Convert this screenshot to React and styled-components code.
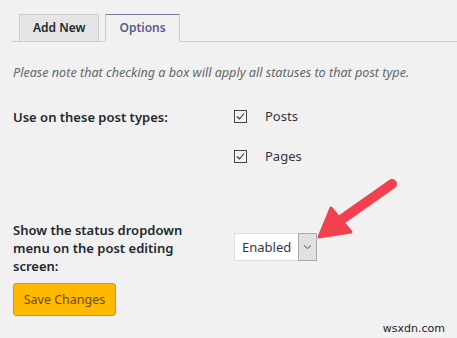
import styled, { createGlobalStyle } from 'styled-components';

const Global = createGlobalStyle`
  body {
    margin: 0;
    background: #f1f1f1;
    font-family: "Noto Sans", "Open Sans", sans-serif;
    color: #23282d;
  }
`;

function App() {
  return (
    <Page>
      <Global />
      <TabBar>
        <Tab>Add New</Tab>
        <Tab active>Options</Tab>
      </TabBar>
      <Note>Please note that checking a box will apply all statuses to that post type.</Note>
      <Form>
        <Label top={9}>Use on these post types:</Label>
        <CheckList>
          <CheckRow>
            <Box><CheckMark /></Box>
            Posts
          </CheckRow>
          <CheckRow>
            <Box><CheckMark /></Box>
            Pages
          </CheckRow>
        </CheckList>
        <Label top={56}>
          Show the status dropdown
          <br />
          menu on the post editing
          <br />
          screen:
        </Label>
        <SelectWrap>
          <Select>
            <SelectText>Enabled</SelectText>
            <SelectButton>
              <svg width="9" height="6" viewBox="0 0 9 6">
                <path d="M1 1.5 L4.5 4.5 L8 1.5" fill="none" stroke="#555" strokeWidth="1" />
              </svg>
            </SelectButton>
          </Select>
        </SelectWrap>
      </Form>
      <SaveButton>Save Changes</SaveButton>
      <Watermark>wsxdn.com</Watermark>
      <Arrow width="457" height="338" viewBox="0 0 457 338">
        <line x1="392" y1="184" x2="338" y2="222" stroke="#f2404e" strokeWidth="10" strokeLinecap="round" />
        <polygon points="319,237 331,208 351,232" fill="#f2404e" stroke="#f2404e" strokeWidth="3" strokeLinejoin="round" />
      </Arrow>
    </Page>
  );
}

export default App;

function CheckMark() {
  return (
    <svg width="11" height="11" viewBox="0 0 11 11">
      <path d="M2 5.5 L4.5 8 L9 2.5" fill="none" stroke="#333" strokeWidth="1.1" />
    </svg>
  );
}

const Page = styled.div`
  position: relative;
  width: 457px;
  height: 338px;
  overflow: hidden;
  padding-top: 14px;
  box-sizing: border-box;
`;

const TabBar = styled.div`
  display: flex;
  gap: 6px;
  margin-left: 12px;
  padding-left: 7px;
  border-bottom: 1px solid #ccc;
`;

const Tab = styled.div`
  height: 28px;
  line-height: 26px;
  box-sizing: border-box;
  padding: 0 13px;
  margin-bottom: -1px;
  font-size: 12px;
  font-weight: 600;
  border: 1px solid #ccc;
  border-top-color: ${(p) => (p.active ? '#7c76a9' : '#ccc')};
  border-bottom-color: ${(p) => (p.active ? '#f1f1f1' : '#ccc')};
  background: ${(p) => (p.active ? '#f1f1f1' : '#e5e5e5')};
  color: ${(p) => (p.active ? '#5d5a8c' : '#23282d')};
`;

const Note = styled.p`
  margin: 22px 0 0 13px;
  font-size: 12.6px;
  font-style: italic;
  color: #666;
`;

const Form = styled.div`
  display: grid;
  grid-template-columns: 221px 1fr;
  margin: 18px 0 0 13px;
`;

const Label = styled.div`
  padding-top: ${(p) => p.top}px;
  font-size: 13px;
  font-weight: 600;
  line-height: 18px;
`;

const CheckList = styled.div`
  display: flex;
  flex-direction: column;
  gap: 22px;
  padding-top: 8px;
`;

const CheckRow = styled.div`
  display: flex;
  align-items: center;
  gap: 18px;
  height: 18px;
  font-size: 13px;
  color: #32373c;
`;

const Box = styled.span`
  width: 13px;
  height: 13px;
  box-sizing: border-box;
  border: 1px solid #444;
  display: flex;
  align-items: center;
  justify-content: center;
  background: #f1f1f1;
`;

const SelectWrap = styled.div`
  padding-top: 68px;
`;

const Select = styled.div`
  display: flex;
  width: 83px;
  height: 28px;
  box-sizing: border-box;
  background: #fff;
  border: 1px solid #ddd;
`;

const SelectText = styled.span`
  flex: 1;
  padding-left: 7px;
  line-height: 26px;
  font-size: 13px;
  color: #32373c;
`;

const SelectButton = styled.span`
  width: 17px;
  margin: -1px -1px -1px 0;
  background: #e0e0e0;
  border: 1px solid #aaa;
  display: flex;
  align-items: center;
  justify-content: center;
`;

const SaveButton = styled.button`
  display: block;
  margin: 8px 0 0 13px;
  width: 103px;
  height: 33px;
  background: #ffb900;
  border: 1px solid #d39b00;
  border-radius: 3px;
  font-family: "Noto Sans", sans-serif;
  font-size: 12.5px;
  color: #6b4e00;
  padding: 0;
`;

const Watermark = styled.div`
  position: absolute;
  right: 12px;
  bottom: 3px;
  font-family: "DejaVu Sans", sans-serif;
  font-size: 11px;
  color: #222;
`;

const Arrow = styled.svg`
  position: absolute;
  left: 0;
  top: 0;
  pointer-events: none;
`;
